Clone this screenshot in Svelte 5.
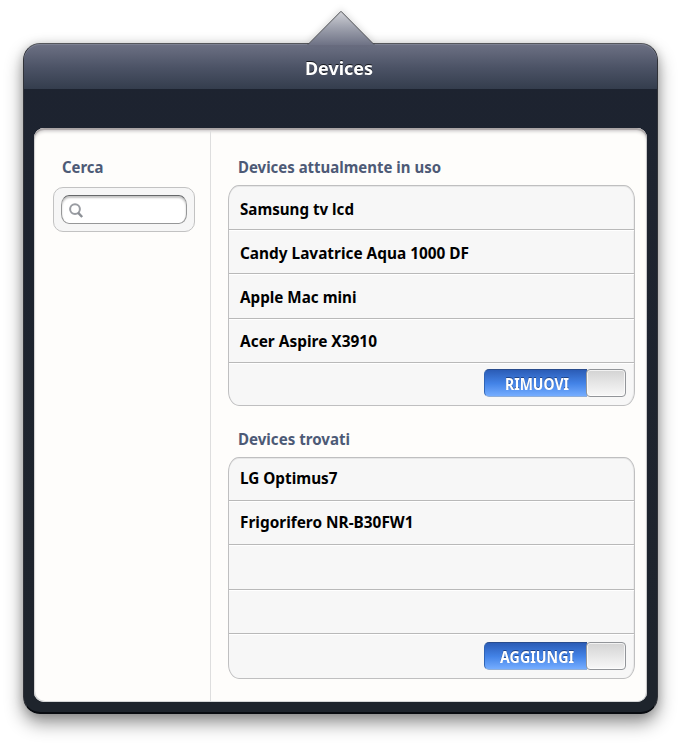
<script>
  // w is the drawn width of each label, in pixels; dy nudges its baseline
  const groups = [
    {
      title: { t: 'Devices attualmente in uso', w: 203 },
      rows: [
        { t: 'Samsung tv lcd', w: 114 },
        { t: 'Candy Lavatrice Aqua 1000 DF', w: 229 },
        { t: 'Apple Mac mini', w: 116.5 },
        { t: 'Acer Aspire X3910', w: 137, dy: -1 },
      ],
      action: { t: 'RIMUOVI', w: 64 },
      heights: [43, 43, 44, 43, 42],
      kind: 'used',
    },
    {
      title: { t: 'Devices trovati', w: 112 },
      rows: [
        { t: 'LG Optimus7', w: 97.5 },
        { t: 'Frigorifero NR-B30FW1', w: 173.5, dy: 1 },
        null,
        null,
      ],
      action: { t: 'AGGIUNGI', w: 74 },
      heights: [42, 43, 44, 43, 44],
      kind: 'found',
    },
  ];
</script>

{#snippet label(item, cls)}
  <svg class="label {cls}" width={item.w} height="24">
    <text x="0" y={18 + (item.dy ?? 0)} textLength={item.w} lengthAdjust="spacingAndGlyphs">{item.t}</text>
  </svg>
{/snippet}

<div class="stage">
  <div class="popover">
    <svg class="arrow" width="70" height="35" viewBox="0 0 70 35">
      <defs>
        <linearGradient id="tip" x1="0" y1="0" x2="0" y2="1">
          <stop offset="0" stop-color="#d2d3d8" />
          <stop offset=".45" stop-color="#a1a4b0" />
          <stop offset="1" stop-color="#6e7285" />
        </linearGradient>
      </defs>
      <path d="M2 34.5L35 1.5L68 34.5V35H2z" fill="url(#tip)" />
      <path d="M1 33.8H2.7L35 1.3L67.3 33.8H69" fill="none" stroke="#4b4d52" />
    </svg>
    <header>{@render label({ t: 'Devices', w: 68 }, 'heading')}</header>
    <main>
      <aside>
        {@render label({ t: 'Cerca', w: 41.5 }, 'section')}
        <div class="search">
          <div class="field">
            <svg width="16" height="16" viewBox="0 0 16 16">
              <circle cx="7" cy="7.1" r="4.9" fill="none" stroke="#999ca2" stroke-width="2" />
              <path d="M10 10.6L14.2 15" stroke="#8c9096" stroke-width="2.4" />
            </svg>
          </div>
        </div>
      </aside>
      <div class="lists">
        {#each groups as g}
          <section class={g.kind}>
            {@render label(g.title, 'section')}
            <div class="card">
              {#each g.rows as row, i}
                <div class="row" style="height: {g.heights[i]}px">
                  {#if row}{@render label(row, 'device')}{/if}
                </div>
              {/each}
              <div class="row last" style="height: {g.heights[4]}px">
                <div class="toggle">
                  <div class="on">{@render label(g.action, 'action')}</div>
                  <div class="knob"></div>
                </div>
              </div>
            </div>
          </section>
        {/each}
      </div>
    </main>
  </div>
</div>

<style>
  :global(body) {
    margin: 0;
    background: #fff;
    overflow: hidden;
  }
  .stage {
    box-sizing: border-box;
    width: 682px;
    height: 748px;
    padding: 43px 0 0 23px;
    background: #fff;
    overflow: hidden;
    font-family: 'Noto Sans', 'Open Sans', sans-serif;
  }
  .popover {
    position: relative;
    box-sizing: border-box;
    width: 635px;
    height: 671px;
    padding: 0 10px 11px 10px;
    border: 1px solid #303238;
    border-top-color: #55575c;
    border-bottom: 2px solid #080b10;
    border-radius: 17px;
    background: linear-gradient(#1d2330, #1e242c);
    box-shadow: 0 9px 18px rgba(0, 0, 0, 0.43), 0 1px 10px rgba(0, 0, 0, 0.16);
  }
  .arrow {
    position: absolute;
    left: 282px;
    top: -34px;
    filter: drop-shadow(0 -2px 3px rgba(0, 0, 0, 0.13));
  }
  header {
    height: 45px;
    margin: 0 -10px 39px;
    border-radius: 16px 16px 0 0;
    background: linear-gradient(#6d7184, #4c5366 52%, #343d4d);
    box-shadow: inset 0 1px #7d8192;
    display: flex;
    justify-content: center;
    align-items: flex-start;
    padding: 0;
  }
  .label {
    display: block;
    overflow: visible;
    flex: none;
  }
  .heading {
    margin: 13px 0 0 -4px;
    font-size: 18.5px;
    font-weight: 700;
    fill: #fff;
    filter: drop-shadow(0 -1px 0 rgba(0, 0, 0, 0.7));
  }
  main {
    box-sizing: border-box;
    height: 574px;
    display: flex;
    border-radius: 10px;
    background: #fefdfb;
    box-shadow: inset 0 2px 1px #a9a4a5, inset 0 4px 3px #d9d7d7, inset -1px 0 #c6c8ca, inset 1px -1px #d5d7d8;
  }
  aside {
    box-sizing: border-box;
    width: 177px;
    margin: 3px 0 1px;
    padding: 24px 15px 0 19px;
    border-right: 1px solid #dedede;
  }
  .section {
    font-size: 16px;
    font-weight: 700;
    fill: #4d5a76;
  }
  aside .section {
    margin-left: 9px;
  }
  .search {
    box-sizing: border-box;
    width: 142px;
    height: 45px;
    margin-top: 8px;
    padding: 7px;
    border: 1px solid #c2c2c2;
    border-radius: 10px;
    background: #f6f6f6;
  }
  .field {
    box-sizing: border-box;
    height: 29px;
    padding: 6px;
    border: 1px solid #969798;
    border-top-color: #66686a;
    border-radius: 8px / 10px;
    background: #fff;
    box-shadow: inset 0 2px 2px #c4c4c4;
  }
  .field svg {
    display: block;
  }
  .lists {
    padding: 27px 0 0 17px;
  }
  .lists .section {
    margin-left: 10px;
  }
  .found {
    margin-top: 21px;
  }
  .card {
    box-sizing: border-box;
    width: 407px;
    margin-top: 6px;
    border: 1px solid #bfbfc0;
    border-radius: 11px / 15px;
    background: #f7f7f7;
    box-shadow: inset 0 1px #e7e7e7, inset -1px 0 #ececec;
  }
  .row {
    box-sizing: content-box;
    padding-left: 11px;
    border-bottom: 1px solid #b9b9b9;
    display: flex;
    align-items: flex-start;
  }
  .row + .row {
    box-shadow: inset 0 1px #fff;
  }
  .row.last {
    border-bottom: 0;
    box-shadow: inset 0 1px #fff;
    border-radius: 0 0 10px 10px / 0 0 14px 14px;
    justify-content: flex-end;
    padding-right: 8px;
  }
  .device {
    margin-top: 11px;
    font-size: 16px;
    font-weight: 700;
    fill: #000;
  }
  .found .device {
    margin-top: 8px;
  }
  .toggle {
    display: flex;
    width: 142px;
    height: 28px;
    margin-top: 6px;
  }
  .found .toggle {
    margin-top: 8px;
  }
  .on {
    box-sizing: border-box;
    width: 103px;
    height: 28px;
    flex: none;
    display: flex;
    justify-content: center;
    border: 1px solid #2f64b5;
    border-top-color: #294c8d;
    border-right: 0;
    border-bottom-color: #8faed9;
    border-radius: 5px 0 0 5px;
    background: linear-gradient(#2b5cb6, #4383e7 52%, #75adff);
  }
  .action {
    margin: 2px 0 0 2px;
    font-size: 16px;
    font-weight: 700;
    fill: #fff;
    filter: drop-shadow(0 -1px 0 rgba(20, 45, 95, 0.65));
  }
  .knob {
    box-sizing: border-box;
    width: 40px;
    height: 28px;
    margin-left: -1px;
    flex: none;
    border: 1px solid #929599;
    border-radius: 4px;
    background: linear-gradient(#d3d3d3, #e6e6e6 50%, #f8f8f8);
    box-shadow: inset 0 0 0 1px rgba(255, 255, 255, 0.7);
  }
</style>
